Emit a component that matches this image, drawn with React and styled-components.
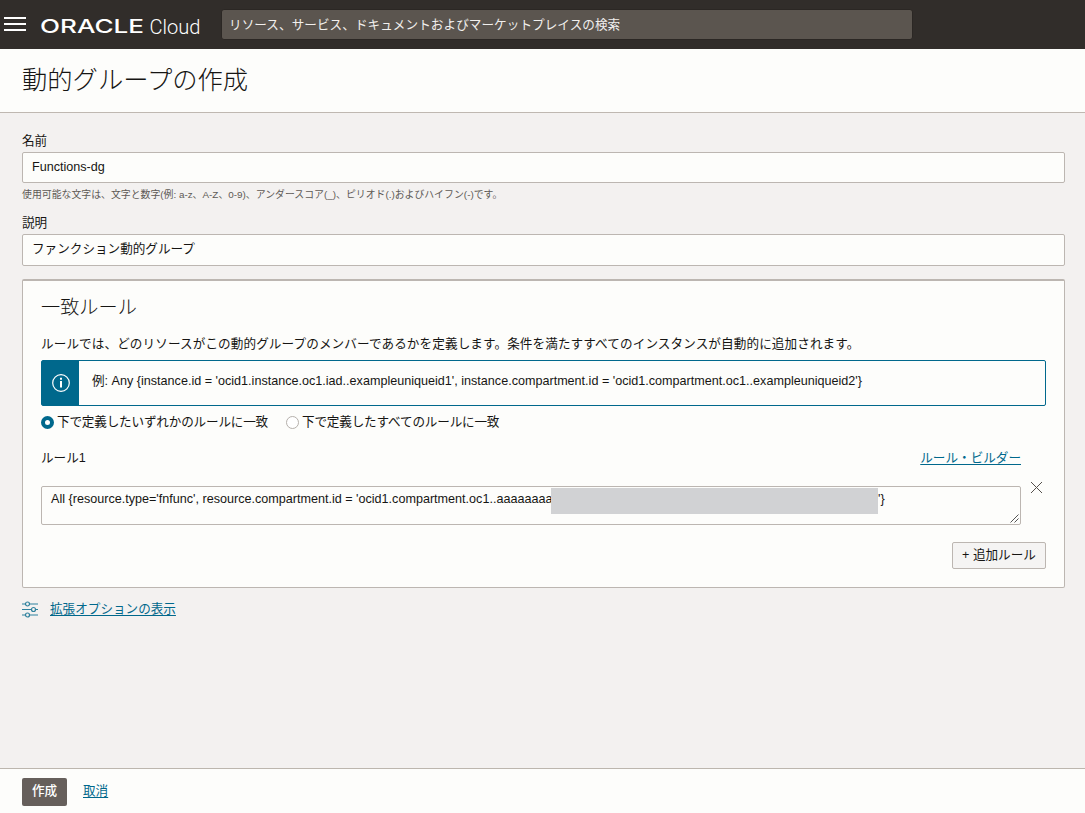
import React from 'react';
import styled, { createGlobalStyle } from 'styled-components';

const GlobalStyle = createGlobalStyle`
  * {
    box-sizing: border-box;
  }
  body {
    margin: 0;
    background: #f3f1f0;
    color: #161513;
    font-family: 'Liberation Sans', 'Noto Sans CJK JP', sans-serif;
    font-size: 12.6px;
    line-height: 18px;
  }
`;

const Page = styled.div`
  display: flex;
  flex-direction: column;
  height: 813px;
  overflow: hidden;
`;

const Header = styled.header`
  display: flex;
  align-items: flex-start;
  height: 49px;
  padding-left: 4px;
  background: #312d2a;
`;

const MenuIcon = styled.svg`
  width: 22px;
  height: 14px;
  margin-top: 17px;
`;

const Logo = styled.svg`
  width: 162px;
  height: 30px;
  margin: 10px 0 0 13px;
  fill: #fff;
`;

const Search = styled.div`
  width: 692px;
  height: 31px;
  margin: 9px 0 0 20px;
  padding: 0 7px;
  border: 1px solid #2b2724;
  border-radius: 3px;
  background: #5b554f;
  color: #f1efed;
  letter-spacing: 0.06px;
  line-height: 31px;
`;

const TitleBar = styled.div`
  height: 64px;
  padding-left: 22px;
  border-bottom: 1px solid #bfb8b1;
  background: #fdfdfb;
`;

const Title = styled.h1`
  margin: 0;
  font-size: 25.3px;
  font-weight: 300;
  line-height: 62px;
`;

const Content = styled.main`
  flex: 1;
  padding: 19px 20px 0 22px;
`;

const Label = styled.label`
  display: block;
  height: 20px;
`;

const Input = styled.div`
  height: ${props => props.height}px;
  padding-left: 9px;
  border: 1px solid #bcb6b1;
  border-radius: 2px;
  background: #fdfdfb;
  line-height: 28px;
`;

const Hint = styled.div`
  height: 31px;
  padding-top: 3px;
  color: #5d5955;
  font-size: 9.9px;
`;

const Panel = styled.section`
  height: 309px;
  margin-top: 13px;
  padding: 0 18px;
  border: 1px solid #bcb6b1;
  border-top-width: 2px;
  border-radius: 2px;
  background: #fdfdfb;
`;

const PanelTitle = styled.h2`
  height: 54px;
  margin: 0;
  font-size: 19.2px;
  font-weight: 300;
  line-height: 54px;
`;

const Description = styled.p`
  height: 25px;
  margin: 0;
  letter-spacing: 0.1px;
`;

const InfoBox = styled.div`
  display: flex;
  height: 46px;
  border: 1px solid #00688c;
  border-radius: 2px;
  line-height: 41px;
`;

const InfoIcon = styled.div`
  display: flex;
  align-items: center;
  justify-content: center;
  width: 37px;
  margin-right: 13px;
  background: #00688c;
`;

const Radios = styled.div`
  display: flex;
  gap: 18px;
  height: 32px;
  padding-top: 7px;
`;

const RadioLabel = styled.label`
  display: flex;
  align-items: center;
  gap: 3px;
  height: 18px;
  letter-spacing: -0.18px;
`;

const Radio = styled.span`
  width: 13px;
  height: 13px;
  border: ${props => (props.$checked ? '4.5px solid #00688c' : '1px solid #b5b0ab')};
  border-radius: 50%;
  background: #fff;
`;

const RuleHead = styled.div`
  display: flex;
  justify-content: space-between;
  height: 48px;
  padding: 11px 25px 0 0;
`;

const Link = styled.a`
  color: #00688c;
  text-decoration: underline;
  text-underline-offset: 2px;
`;

const RuleRow = styled.div`
  display: flex;
  gap: 9px;
`;

const RuleText = styled.div`
  display: flex;
  position: relative;
  width: 980px;
  height: 39px;
  padding: 1px 0 0 9px;
  border: 1px solid #bcb6b1;
  border-radius: 2px;
  line-height: 22px;
  white-space: pre;
`;

const Before = styled.span`
  width: 500px;
`;

const Masked = styled.span`
  width: 327px;
  height: 26px;
  background: #d1d2d4;
`;

const Grip = styled.svg`
  position: absolute;
  right: 1px;
  bottom: 1px;
`;

const RemoveIcon = styled.svg`
  width: 13px;
  height: 13px;
  margin-top: -5px;
  stroke: #55504c;
`;

const Actions = styled.div`
  display: flex;
  justify-content: flex-end;
  margin-top: 17px;
`;

const AddButton = styled.button`
  width: 94px;
  height: 27px;
  padding: 0 0 2px;
  border: 1px solid #bcb6b1;
  border-radius: 2px;
  background: #f5f4f3;
  color: #161513;
  font: inherit;
  white-space: nowrap;
`;

const Advanced = styled.div`
  display: flex;
  align-items: center;
  gap: 11px;
  margin-top: 12px;
`;

const Footer = styled.footer`
  display: flex;
  gap: 16px;
  height: 45px;
  padding: 9px 22px 0;
  border-top: 1px solid #bcb6ae;
  background: #fdfdfb;
  line-height: 26px;
`;

const CreateButton = styled.button`
  width: 45px;
  height: 28px;
  padding: 0 0 2px;
  border: 0;
  border-radius: 2px;
  background: #665f5b;
  color: #fff;
  font: inherit;
  font-weight: 500;
`;

const App = () => (
  <Page>
    <GlobalStyle />
    <Header>
      <MenuIcon viewBox="0 0 22 14" fill="#fff">
        <path d="M0 0h22v2H0zM0 6h22v2H0zM0 12h22v2H0z" />
      </MenuIcon>
      <Logo viewBox="0 0 162 30">
        <text
          x="1"
          y="23.3"
          fontFamily="Inter"
          fontSize="18.8"
          fontWeight="500"
          textLength="104"
          lengthAdjust="spacingAndGlyphs"
        >
          ORACLE
        </text>
        <text
          x="110.5"
          y="23.5"
          fontFamily="Roboto"
          fontSize="20"
          fontWeight="300"
          textLength="51"
          lengthAdjust="spacingAndGlyphs"
        >
          Cloud
        </text>
      </Logo>
      <Search>リソース、サービス、ドキュメントおよびマーケットプレイスの検索</Search>
    </Header>
    <TitleBar>
      <Title>動的グループの作成</Title>
    </TitleBar>
    <Content>
      <Label>名前</Label>
      <Input height={31}>Functions-dg</Input>
      <Hint>
        使用可能な文字は、文字と数字(例: a-z、A-Z、0-9)、アンダースコア(_)、ピリオド(.)およびハイフン(-)です。
      </Hint>
      <Label>説明</Label>
      <Input height={32}>ファンクション動的グループ</Input>
      <Panel>
        <PanelTitle>一致ルール</PanelTitle>
        <Description>
          ルールでは、どのリソースがこの動的グループのメンバーであるかを定義します。条件を満たすすべてのインスタンスが自動的に追加されます。
        </Description>
        <InfoBox>
          <InfoIcon>
            <svg width="18" height="18" viewBox="0 0 18 18" fill="none" stroke="#fff">
              <circle cx="9" cy="9" r="8.3" strokeWidth="1.2" />
              <path d="M9 7v6.5M9 3.8v2" strokeWidth="2" />
            </svg>
          </InfoIcon>
          例: Any {'{'}instance.id = 'ocid1.instance.oc1.iad..exampleuniqueid1', instance.compartment.id =
          {" 'ocid1.compartment.oc1..exampleuniqueid2'}"}
        </InfoBox>
        <Radios>
          <RadioLabel>
            <Radio $checked />
            下で定義したいずれかのルールに一致
          </RadioLabel>
          <RadioLabel>
            <Radio />
            下で定義したすべてのルールに一致
          </RadioLabel>
        </Radios>
        <RuleHead>
          <span>ルール1</span>
          <Link>ルール・ビルダー</Link>
        </RuleHead>
        <RuleRow>
          <RuleText>
            <Before>
              {"All {resource.type='fnfunc', resource.compartment.id = 'ocid1.compartment.oc1..aaaaaaaa"}
            </Before>
            <Masked />
            <span>{"'}"}</span>
            <Grip width="9" height="9" viewBox="0 0 9 9" stroke="#555">
              <path d="M0.5 8.5l8-8M4.5 8.5l4-4" />
            </Grip>
          </RuleText>
          <RemoveIcon viewBox="0 0 13 13">
            <path d="M1 1l11 11M12 1L1 12" />
          </RemoveIcon>
        </RuleRow>
        <Actions>
          <AddButton>+ 追加ルール</AddButton>
        </Actions>
      </Panel>
      <Advanced>
        <svg width="17" height="17" viewBox="0 0 17 17" fill="none" stroke="#2f819d">
          <path d="M0 3h3M8 3h8M0 8.5h9M14 8.5h2M0 14h3M8 14h8" strokeWidth="1.2" />
          <circle cx="5.5" cy="3" r="2" strokeWidth="1.2" />
          <circle cx="11.5" cy="8.5" r="2" strokeWidth="1.2" />
          <circle cx="5.5" cy="14" r="2" strokeWidth="1.2" />
        </svg>
        <Link>拡張オプションの表示</Link>
      </Advanced>
    </Content>
    <Footer>
      <CreateButton>作成</CreateButton>
      <Link>取消</Link>
    </Footer>
  </Page>
);

export default App;
